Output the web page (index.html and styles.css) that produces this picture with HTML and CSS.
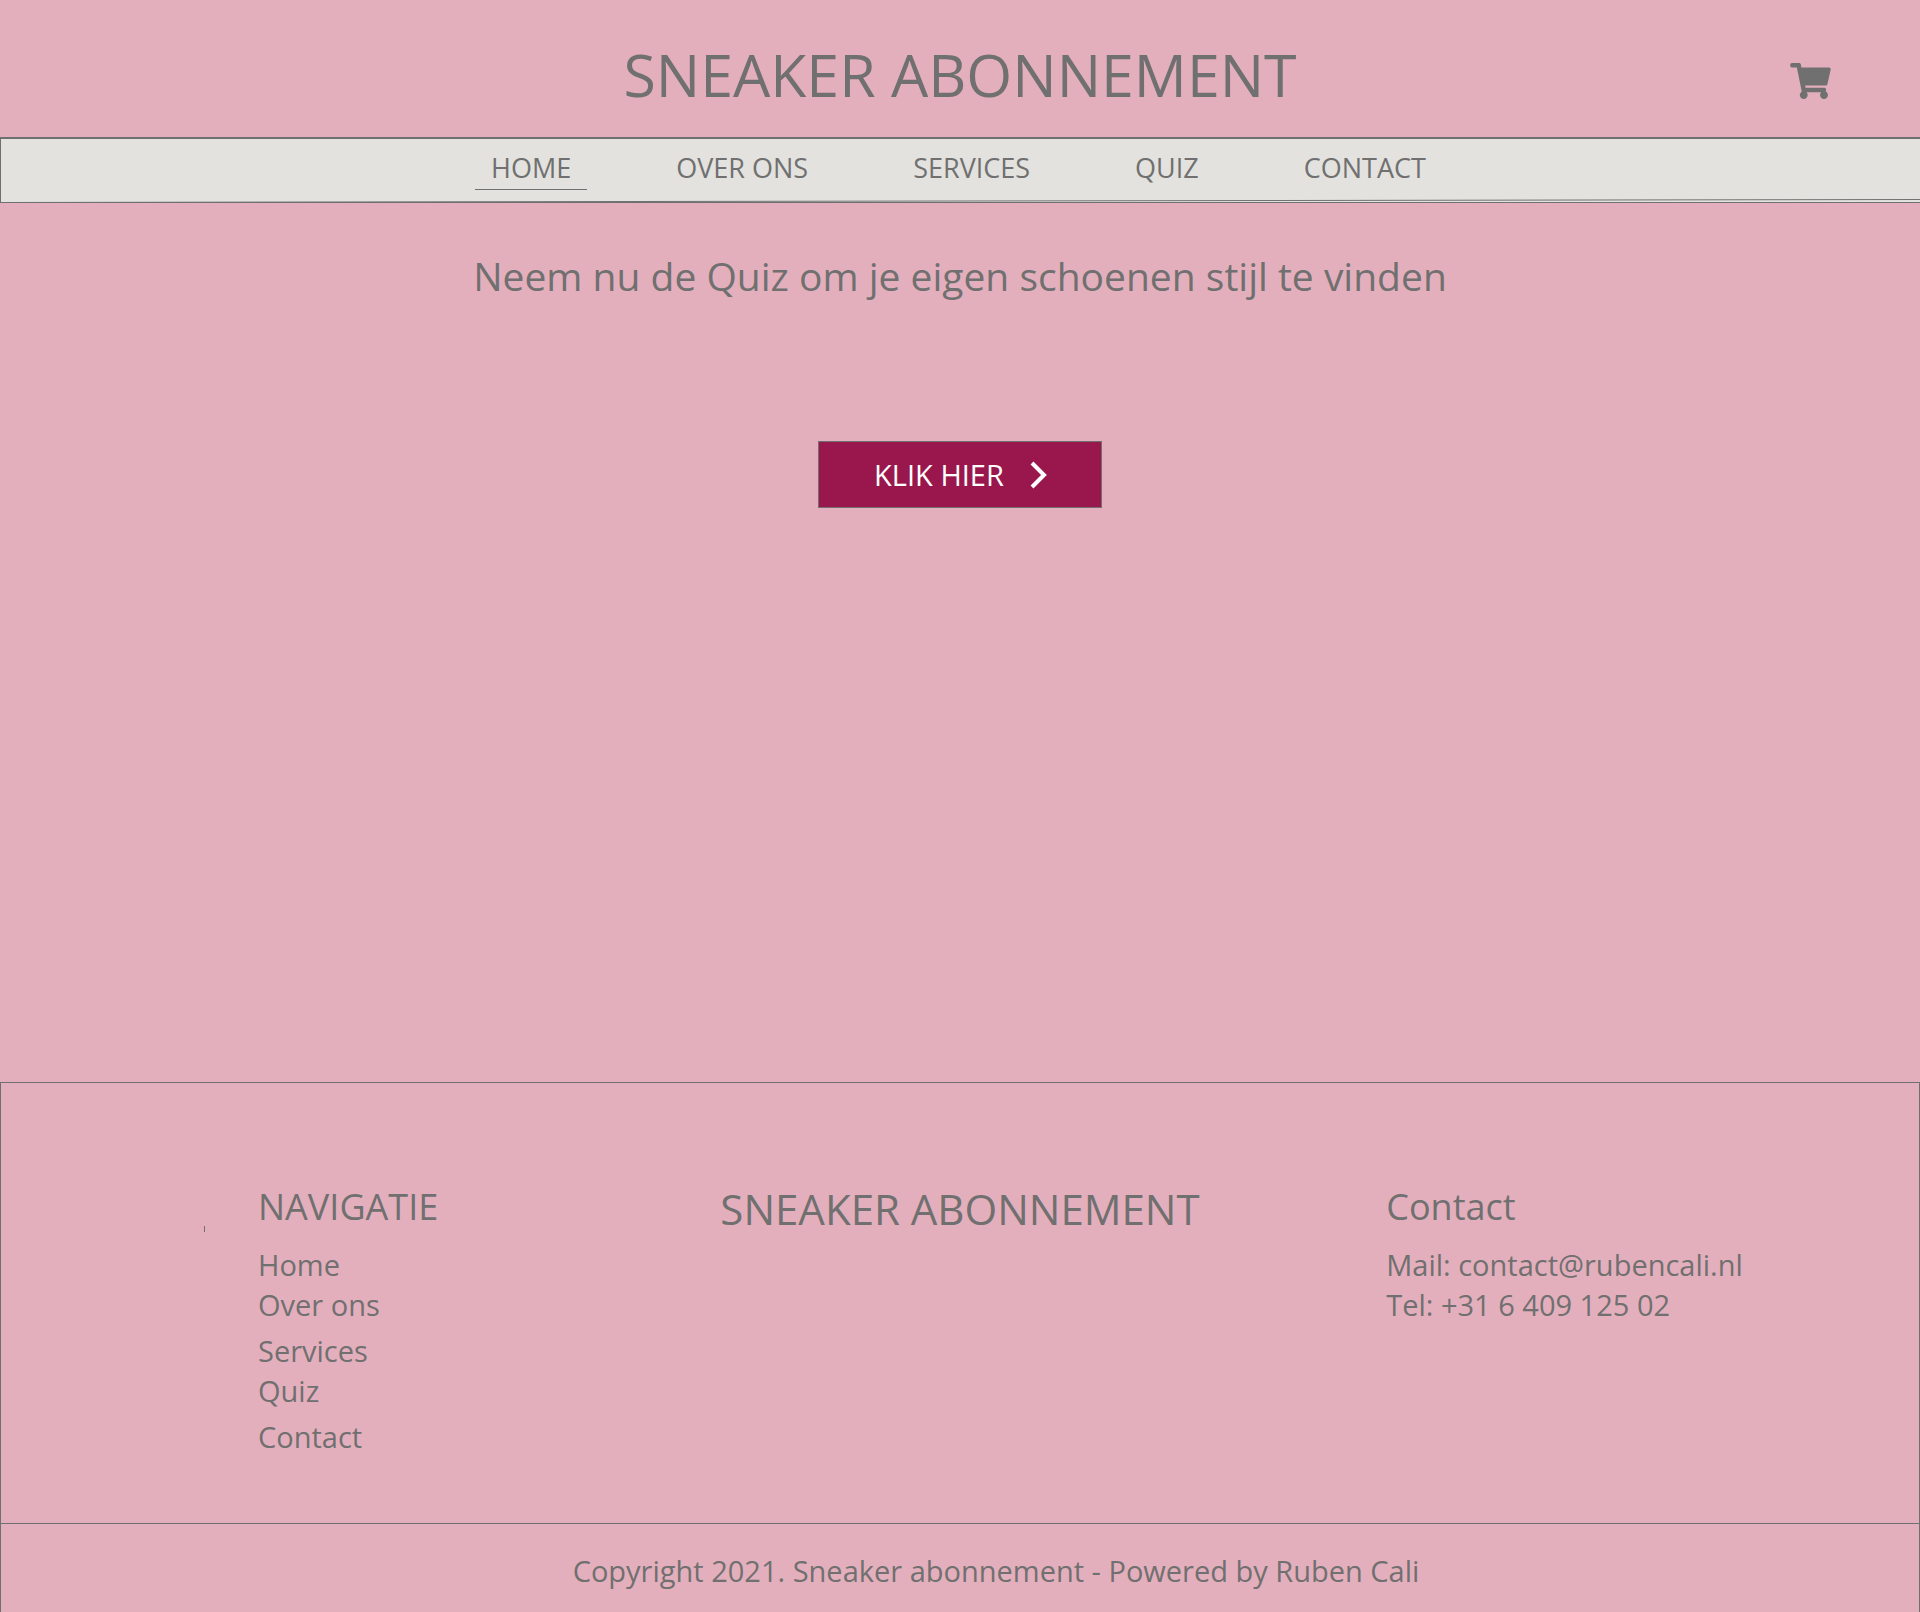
FILE: index.html
```html
<!DOCTYPE html>
<html lang="nl">
<head>
  <meta charset="utf-8">
  <meta name="viewport" content="width=device-width, initial-scale=1">
  <title>Sneaker Abonnement</title>
  <link rel="stylesheet" href="styles.css">
</head>
<body>
  <header class="header">
    <h1 class="header-title">SNEAKER ABONNEMENT</h1>
    <a class="cart" href="#" aria-label="Winkelwagen">
      <svg class="cart-icon" viewBox="0 0 576 512" aria-hidden="true"><path d="M528.12 301.319l47.273-208C578.806 78.301 567.391 64 551.99 64H159.208l-9.166-44.81C147.758 8.021 137.93 0 126.529 0H24C10.745 0 0 10.745 0 24v16c0 13.255 10.745 24 24 24h69.883l70.248 343.435C147.325 417.1 136 435.222 136 456c0 30.928 25.072 56 56 56s56-25.072 56-56c0-15.674-6.447-29.835-16.824-40h209.647C430.447 426.165 424 440.326 424 456c0 30.928 25.072 56 56 56s56-25.072 56-56c0-22.172-12.888-41.332-31.579-50.405l5.517-24.276c3.413-15.018-8.002-29.319-23.403-29.319H218.117l-6.545-32h293.145c11.206 0 20.92-7.754 23.403-18.681z"/></svg>
    </a>
  </header>

  <nav class="nav">
    <a class="nav-link nav-link-active" href="#">HOME</a>
    <a class="nav-link" href="#">OVER ONS</a>
    <a class="nav-link" href="#">SERVICES</a>
    <a class="nav-link" href="#">QUIZ</a>
    <a class="nav-link" href="#">CONTACT</a>
    <svg class="nav-rule" viewBox="0 0 1920 5" preserveAspectRatio="none" aria-hidden="true"><path d="M0 4.500L1920 1.500"/></svg>
  </nav>

  <main class="main">
    <h2 class="main-title">Neem nu de Quiz om je eigen schoenen stijl te vinden</h2>
    <button class="button" type="button">
      KLIK HIER
      <svg class="button-icon" viewBox="0 0 17 28" aria-hidden="true"><path d="M2 2L14 14L2 26"/></svg>
    </button>
  </main>

  <footer class="footer">
    <div class="footer-columns">
      <section class="footer-nav">
        <h3 class="footer-heading">NAVIGATIE</h3>
        <ul class="footer-list">
          <li><a href="#">Home</a></li>
          <li><a href="#">Over ons</a></li>
          <li class="group"><a href="#">Services</a></li>
          <li><a href="#">Quiz</a></li>
          <li class="group"><a href="#">Contact</a></li>
        </ul>
      </section>
      <p class="footer-brand">SNEAKER ABONNEMENT</p>
      <section>
        <h3 class="footer-heading">Contact</h3>
        <ul class="footer-list">
          <li>Mail: <a href="mailto:contact@rubencali.nl">contact@rubencali.nl</a></li>
          <li>Tel: <a href="tel:+31640912502">+31 6 409 125 02</a></li>
        </ul>
      </section>
    </div>
    <p class="copyright">Copyright 2021. Sneaker abonnement - Powered by Ruben Cali</p>
  </footer>
</body>
</html>
```
FILE: styles.css
```css
* {
  box-sizing: border-box;
}

body {
  margin: 0;
  background: #e4afbc;
  color: #707070;
  font-family: "Segoe UI", "Open Sans", "Noto Sans", sans-serif;
}

h1, h2, h3, p, ul {
  margin: 0;
  padding: 0;
  font-weight: 400;
}

ul {
  list-style: none;
}

a {
  color: inherit;
  text-decoration: none;
}

.header {
  display: grid;
  grid-template-columns: 1fr auto 1fr;
  padding: 34px 89px 23px;
}

.header-title {
  grid-column: 2;
  font-size: 59px;
  line-height: 80px;
}

.cart {
  justify-self: end;
  padding-top: 29px;
}

.cart-icon {
  display: block;
  width: 41px;
  height: 36px;
  fill: currentColor;
}

.nav {
  position: relative;
  display: flex;
  justify-content: center;
  gap: 73px;
  padding: 0 4px 12px 0;
  background: #e3e2de;
  border: solid #707070;
  border-width: 2px 0 1px 1px;
}

.nav-link {
  padding: 12px 16px 4px;
  border-bottom: 1px solid transparent;
  font-size: 27px;
  line-height: 34px;
}

.nav-link-active {
  border-bottom-color: #707070;
}

.nav-rule {
  position: absolute;
  left: 0;
  bottom: -1px;
  width: 100%;
  height: 5px;
  fill: none;
  stroke: #707070;
}

.main {
  display: flex;
  flex-direction: column;
  align-items: center;
  gap: 135px;
  padding: 43px 0 574px;
}

.main-title {
  font-size: 39px;
  line-height: 60px;
}

.button {
  display: flex;
  align-items: center;
  gap: 26px;
  padding: 12px 54px 12px 55px;
  border: 1px solid #707070;
  background: #9a174d;
  color: #fff;
  font: inherit;
  font-size: 29px;
  line-height: 41px;
}

.button-icon {
  width: 17px;
  height: 28px;
  fill: none;
  stroke: currentColor;
  stroke-width: 4;
}

.footer {
  border: solid #707070;
  border-width: 1px 1px 0;
}

.footer-columns {
  display: grid;
  grid-template-columns: 5fr 8fr 5fr;
  padding: 94px 0 66px;
  border-bottom: 1px solid #707070;
}

.footer-nav {
  position: relative;
  padding-left: 257px;
}

.footer-nav::before {
  content: "";
  position: absolute;
  left: 203px;
  top: 49px;
  height: 6px;
  border-left: 1px solid #707070;
}

.footer-heading {
  margin-bottom: 8px;
  font-size: 36px;
  line-height: 60px;
}

.footer-list {
  font-size: 29px;
  line-height: 40px;
}

.group {
  margin-top: 6px;
}

.footer-brand {
  font-size: 42px;
  line-height: 64px;
  text-align: center;
}

.copyright {
  padding: 27px 0 21px 72px;
  font-size: 29px;
  line-height: 40px;
  text-align: center;
}
```
